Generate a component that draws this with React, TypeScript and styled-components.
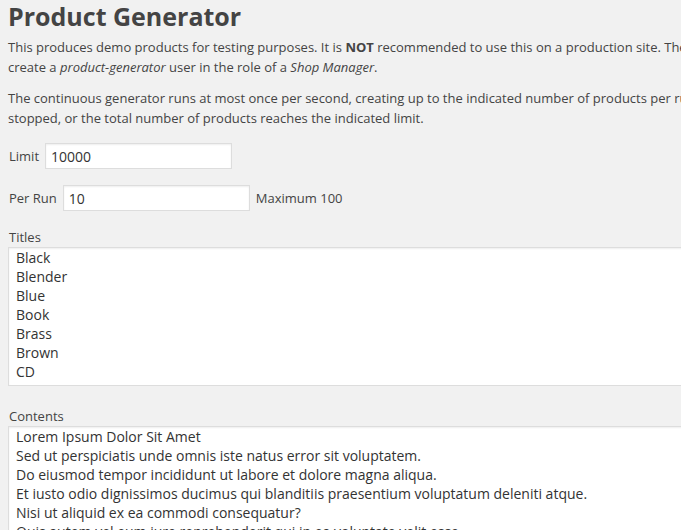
import React from 'react';
import styled, { createGlobalStyle } from 'styled-components';

const GlobalStyle = createGlobalStyle`
    html, body {
        margin: 0;
        padding: 0;
        background: #f1f1f1;
        overflow: hidden;
    }

    body {
        font-family: 'Open Sans', 'Liberation Sans', sans-serif;
        font-size: 13px;
        color: #444;
    }
`;

const Wrap = styled.div`
    width: 1100px;
    padding-left: 8px;
`;

const Title = styled.h1`
    margin: 0;
    font-size: 25px;
    line-height: 32px;
    font-weight: 700;
    color: #444;
`;

const Paragraph = styled.p<{ $top: number }>`
    margin: ${props => props.$top}px 0 0;
    line-height: 20px;
    white-space: nowrap;
`;

const FieldRow = styled.div<{ $top: number }>`
    display: flex;
    align-items: center;
    gap: 6px;
    margin-top: ${props => props.$top}px;
    padding-left: 1px;
`;

const Label = styled.label`
    line-height: 20px;
`;

const TextInput = styled.input`
    box-sizing: border-box;
    width: 187px;
    height: 26px;
    padding: 3px 5px;
    border: 1px solid #ddd;
    background: #fff;
    box-shadow: inset 0 1px 2px rgba(0, 0, 0, 0.07);
    font-family: inherit;
    font-size: 14px;
    color: #333;
    outline: none;
`;

const FieldLabel = styled.div<{ $top: number }>`
    margin-top: ${props => props.$top}px;
    line-height: 20px;
    padding-left: 1px;
`;

const TextArea = styled.textarea<{ $height: number }>`
    display: block;
    box-sizing: border-box;
    width: 1000px;
    height: ${props => props.$height}px;
    margin: 0;
    padding: 0 7px;
    border: 1px solid #ddd;
    background: #fff;
    box-shadow: inset 0 1px 2px rgba(0, 0, 0, 0.07);
    font-family: inherit;
    font-size: 14px;
    line-height: 19px;
    color: #333;
    resize: none;
    overflow: hidden;
    outline: none;
`;

const titles = [
    'Black',
    'Blender',
    'Blue',
    'Book',
    'Brass',
    'Brown',
    'CD',
    'Chair',
    'Classic',
].join('\n');

const contents = [
    'Lorem Ipsum Dolor Sit Amet',
    'Sed ut perspiciatis unde omnis iste natus error sit voluptatem.',
    'Do eiusmod tempor incididunt ut labore et dolore magna aliqua.',
    'Et iusto odio dignissimos ducimus qui blanditiis praesentium voluptatum deleniti atque.',
    'Nisi ut aliquid ex ea commodi consequatur?',
    'Quis autem vel eum iure reprehenderit qui in ea voluptate velit esse.',
].join('\n');

const App: React.FunctionComponent = () => {
    return (
        <>
            <GlobalStyle />
            <Wrap>
                <Title>Product Generator</Title>
                <Paragraph $top={5}>
                    This produces demo products for testing purposes. It is{' '}
                    <strong>NOT</strong> recommended to use this on a production site. The
                    generator is best used on a test site.
                    <br />
                    create a <em>product-generator</em> user in the role of a{' '}
                    <em>Shop Manager</em>.
                </Paragraph>
                <Paragraph $top={11}>
                    The continuous generator runs at most once per second, creating up to the
                    indicated number of products per run, until it is
                    <br />
                    stopped, or the total number of products reaches the indicated limit.
                </Paragraph>
                <FieldRow $top={15}>
                    <Label htmlFor="limit">Limit</Label>
                    <TextInput id="limit" defaultValue="10000" />
                </FieldRow>
                <FieldRow $top={16}>
                    <Label htmlFor="per-run">Per Run</Label>
                    <TextInput id="per-run" defaultValue="10" />
                    <span>Maximum 100</span>
                </FieldRow>
                <FieldLabel $top={16}>Titles</FieldLabel>
                <TextArea $height={139} defaultValue={titles} />
                <FieldLabel $top={20}>Contents</FieldLabel>
                <TextArea $height={140} defaultValue={contents} />
            </Wrap>
        </>
    );
};

export default App;
